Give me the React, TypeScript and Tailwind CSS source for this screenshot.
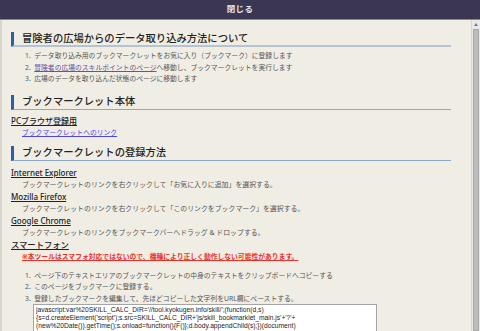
const jp = { fontFamily: '"Noto Sans", "Noto Sans CJK JP", sans-serif' }

function Heading({ children, thick }: { children: React.ReactNode; thick?: boolean }) {
  return (
    <div className={`w-[440px] h-[15px] border-l-[3px] border-l-[#2d5ea8] ${thick ? 'border-b-2 border-b-[#b4c4d2]' : 'border-b border-b-[#8fa8c8]'} pl-[8px] flex items-center`}>
      <span className="text-[10.3px] leading-[13px] font-medium text-[#222]">{children}</span>
    </div>
  )
}

function Label({ children, big }: { children: React.ReactNode; big?: boolean }) {
  return (
    <p className={`${big ? 'text-[8.3px]' : 'text-[8px]'} leading-[12px] font-medium text-[#222] underline underline-offset-1`}>{children}</p>
  )
}

function Desc({ children }: { children: React.ReactNode }) {
  return <p className="pl-[11px] text-[6.9px] leading-[12px] text-[#555]">{children}</p>
}

export default function App() {
  return (
    <div className="w-[480px] h-[331px] flex flex-col overflow-hidden bg-[#f0ede5]" style={jp}>
      {/* barra superior */}
      <div className="h-[20px] bg-[#3b3651] border-b border-[#8a8794] flex items-center justify-center">
        <span className="text-[8.5px] font-bold text-[#e6e4ee] tracking-[0.3px]">閉じる</span>
      </div>

      <div className="flex-1 flex min-h-0">
        <div className="flex-1 border-l-2 border-l-[#d8d5cc] pl-[9px] pt-[12px] overflow-hidden">
          <Heading thick>冒険者の広場からのデータ取り込み方法について</Heading>
          <ol className="mt-[3px] pl-[14px] text-[6.8px] leading-[11.5px] text-[#555]">
            <li>1.&nbsp; データ取り込み用のブックマークレットをお気に入り（ブックマーク）に登録します</li>
            <li>2.&nbsp; <span className="text-[#6b4fa3] underline">冒険者の広場のスキルポイントのページ</span>へ移動し、ブックマークレットを実行します</li>
            <li>3.&nbsp; 広場のデータを取り込んだ状態のページに移動します</li>
          </ol>

          <div className="mt-[10px]">
            <Heading>ブックマークレット本体</Heading>
          </div>
          <div className="mt-[5px]">
            <Label>PCブラウザ登録用</Label>
            <p className="pl-[11px] text-[6.8px] leading-[12px] text-[#4a4ade] underline">ブックマークレットへのリンク</p>
          </div>

          <div className="mt-[7px]">
            <Heading>ブックマークレットの登録方法</Heading>
          </div>
          <div className="mt-[6px]">
            <Label>Internet Explorer</Label>
            <Desc>ブックマークレットのリンクを右クリックして「お気に入りに追加」を選択する。</Desc>
            <Label>Mozilla Firefox</Label>
            <Desc>ブックマークレットのリンクを右クリックして「このリンクをブックマーク」を選択する。</Desc>
            <Label>Google Chrome</Label>
            <Desc>ブックマークレットのリンクをブックマークバーへドラッグ &amp; ドロップする。</Desc>
            <Label big>スマートフォン</Label>
            <p className="pl-[11px] text-[6.8px] leading-[12px] font-bold text-[#e8332b] underline">
              ※本ツールはスマフォ対応ではないので、機種により正しく動作しない可能性があります。
            </p>
          </div>

          <ol className="mt-[7px] pl-[14px] text-[6.8px] leading-[11.5px] text-[#555]">
            <li>1.&nbsp; ページ下のテキストエリアのブックマークレットの中身のテキストをクリップボードへコピーする</li>
            <li>2.&nbsp; このページをブックマークに登録する。</li>
            <li>3.&nbsp; 登録したブックマークを編集して、先ほどコピーした文字列をURL欄にペーストする。</li>
          </ol>
          <div
            className="ml-[22px] w-[344px] h-[40px] bg-white border border-[#a5a5a5] px-[2px] pt-[0.5px] text-[6.7px] leading-[8px] text-[#222] whitespace-pre overflow-hidden"
            style={{ fontFamily: '"Liberation Sans", sans-serif' }}
          >
            {"javascript:var%20SKILL_CALC_DIR='//tool.kyokugen.info/skill/';(function(d,s)\n{s=d.createElement('script');s.src=SKILL_CALC_DIR+'js/skill_bookmarklet_main.js'+'?'+\n(new%20Date()).getTime();s.onload=function(){F()};d.body.appendChild(s);})(document)"}
          </div>
        </div>

        {/* barra de desplazamiento */}
        <div className="w-[9px] bg-[#e9e9e9] border-l border-[#d6d6d6] flex flex-col">
          <div className="h-[9px] flex items-center justify-center">
            <div className="w-0 h-0 border-l-[2.5px] border-r-[2.5px] border-b-[3px] border-l-transparent border-r-transparent border-b-[#777]" />
          </div>
          <div className="flex-1 mx-[1px] bg-[#bdbdbd] border border-[#a9a9a9]" />
        </div>
      </div>
    </div>
  )
}
